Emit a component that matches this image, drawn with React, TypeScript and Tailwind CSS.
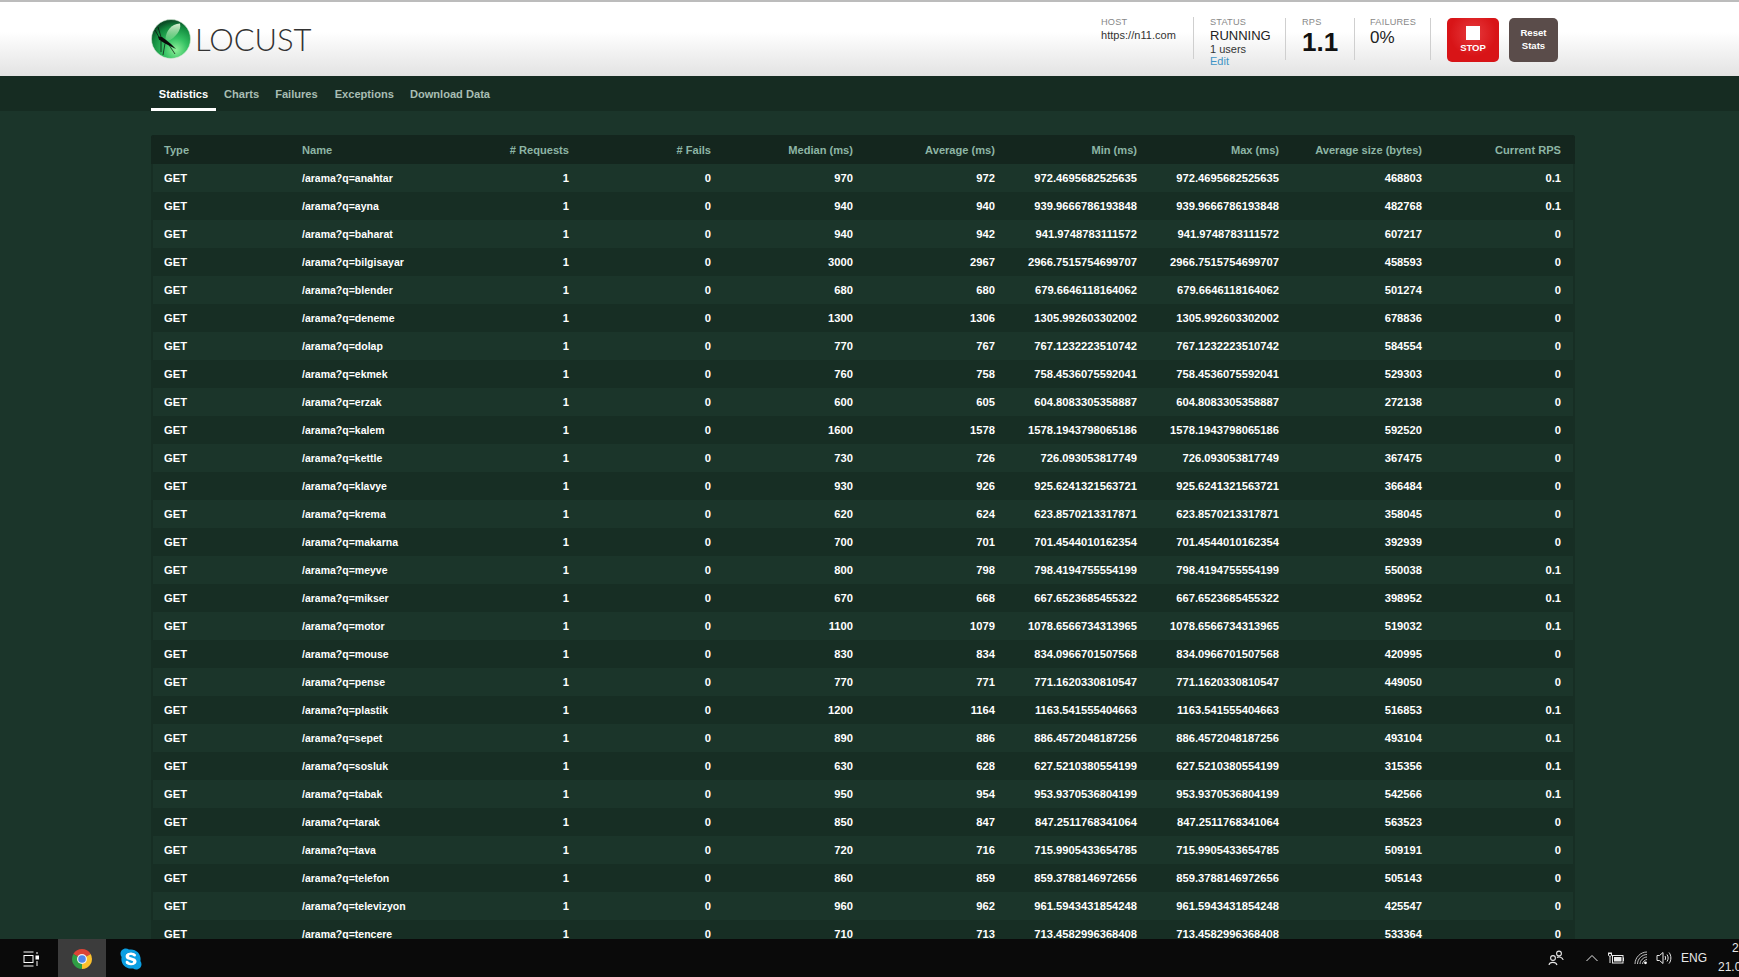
import { FaSkype } from "react-icons/fa";

const rows: [string, number, number, string, number, string][] = [
  ["anahtar", 970, 972, "972.4695682525635", 468803, "0.1"],
  ["ayna", 940, 940, "939.9666786193848", 482768, "0.1"],
  ["baharat", 940, 942, "941.9748783111572", 607217, "0"],
  ["bilgisayar", 3000, 2967, "2966.7515754699707", 458593, "0"],
  ["blender", 680, 680, "679.6646118164062", 501274, "0"],
  ["deneme", 1300, 1306, "1305.992603302002", 678836, "0"],
  ["dolap", 770, 767, "767.1232223510742", 584554, "0"],
  ["ekmek", 760, 758, "758.4536075592041", 529303, "0"],
  ["erzak", 600, 605, "604.8083305358887", 272138, "0"],
  ["kalem", 1600, 1578, "1578.1943798065186", 592520, "0"],
  ["kettle", 730, 726, "726.093053817749", 367475, "0"],
  ["klavye", 930, 926, "925.6241321563721", 366484, "0"],
  ["krema", 620, 624, "623.8570213317871", 358045, "0"],
  ["makarna", 700, 701, "701.4544010162354", 392939, "0"],
  ["meyve", 800, 798, "798.4194755554199", 550038, "0.1"],
  ["mikser", 670, 668, "667.6523685455322", 398952, "0.1"],
  ["motor", 1100, 1079, "1078.6566734313965", 519032, "0.1"],
  ["mouse", 830, 834, "834.0966701507568", 420995, "0"],
  ["pense", 770, 771, "771.1620330810547", 449050, "0"],
  ["plastik", 1200, 1164, "1163.541555404663", 516853, "0.1"],
  ["sepet", 890, 886, "886.4572048187256", 493104, "0.1"],
  ["sosluk", 630, 628, "627.5210380554199", 315356, "0.1"],
  ["tabak", 950, 954, "953.9370536804199", 542566, "0.1"],
  ["tarak", 850, 847, "847.2511768341064", 563523, "0"],
  ["tava", 720, 716, "715.9905433654785", 509191, "0"],
  ["telefon", 860, 859, "859.3788146972656", 505143, "0"],
  ["televizyon", 960, 962, "961.5943431854248", 425547, "0"],
  ["tencere", 710, 713, "713.4582996368408", 533364, "0"],
];

function Logo() {
  return (
    <svg width="40" height="40" viewBox="0 0 40 40" className="shrink-0">
      <defs>
        <radialGradient id="lg" cx="0.62" cy="0.78" r="0.75">
          <stop offset="0" stopColor="#8ff09a" />
          <stop offset="0.4" stopColor="#35c263" />
          <stop offset="0.8" stopColor="#128a3e" />
          <stop offset="1" stopColor="#0b4f27" />
        </radialGradient>
        <linearGradient id="wing" x1="0" y1="0" x2="0" y2="1">
          <stop offset="0" stopColor="#e4f7dc" stopOpacity="0.95" />
          <stop offset="1" stopColor="#9ce6a0" stopOpacity="0.3" />
        </linearGradient>
      </defs>
      <circle cx="20" cy="20" r="19.5" fill="url(#lg)" stroke="#d5e8d5" strokeWidth="0.6" />
      <path d="M14.5 20 C15 12 20 5 29 4.5 C31 11 24 19 17 22 Z" fill="url(#wing)" />
      <path d="M7 17.5 L11 18 L15 21 L20 25 L25 30 L19 27 L14 24.5 L10 22 L8 20.5 Z" fill="#0a0a0a" />
      <path d="M7 8 L10 18 M4 11 L9 20 M10 22 L10 33 M14 24.5 L12 36 M18 26 L24 35" stroke="#0a0a0a" strokeWidth="0.7" fill="none" />
    </svg>
  );
}

function Chrome() {
  return (
    <svg width="24" height="24" viewBox="0 0 48 48" className="mt-[2px]">
      <path d="M24 24 L6.7 14 A20 20 0 0 1 41.3 14 Z" fill="#db4437" />
      <path d="M24 24 L41.3 14 A20 20 0 0 1 24 44 Z" fill="#fbc02d" />
      <path d="M24 24 L24 44 A20 20 0 0 1 6.7 14 Z" fill="#2f9e44" />
      <circle cx="24" cy="24" r="10" fill="#f1f1f1" />
      <circle cx="24" cy="24" r="7.6" fill="#4f86ec" />
    </svg>
  );
}

function TaskView() {
  return (
    <svg width="16" height="16" viewBox="0 0 16 16" fill="none" stroke="#fff" strokeWidth="1">
      <path d="M0.5 1H10.5 M0.5 15H10.5" />
      <rect x="1" y="4.5" width="9" height="7" />
      <rect x="13" y="5" width="2.5" height="3" fill="#fff" />
      <path d="M14 1V3 M14 10V15" />
    </svg>
  );
}

function People() {
  return (
    <svg width="16" height="16" viewBox="0 0 16 16" fill="none" stroke="#e8e8e8" strokeWidth="1.1">
      <circle cx="5" cy="8" r="2.4" />
      <path d="M1 15 C1.5 11.5 8 11.5 9 15" />
      <circle cx="11" cy="3.5" r="2.4" />
      <path d="M9 7.5 C11 6.3 14.5 7 15.2 10" />
    </svg>
  );
}

function Battery() {
  return (
    <svg width="18" height="14" viewBox="0 0 18 14" fill="none" stroke="#e8e8e8" strokeWidth="1">
      <rect x="5.5" y="4.5" width="10.5" height="7.5" />
      <rect x="7" y="6" width="7.5" height="4.5" fill="#e8e8e8" stroke="none" />
      <path d="M16.5 6.5V10" />
      <path d="M1 2.5H5 M2 1V2.5 M4 1V2.5 M1.5 2.5V4.5C1.5 5.5 4.5 5.5 4.5 4.5V2.5 M3 5.5V12" />
    </svg>
  );
}

function Wifi() {
  return (
    <svg width="14" height="14" viewBox="0 0 14 14" fill="none" stroke="#d8d8d8" strokeWidth="0.9">
      <path d="M1 13C1 6.5 6.5 1 13 1" />
      <path d="M3.5 13C3.5 8 8 3.5 13 3.5" />
      <path d="M6 13C6 9.5 9.5 6 13 6" />
      <path d="M8.5 13C8.5 11 11 8.5 13 8.5" />
      <circle cx="11.5" cy="11.8" r="1.4" fill="#fff" stroke="none" />
    </svg>
  );
}

function Volume() {
  return (
    <svg width="16" height="14" viewBox="0 0 16 14" fill="none" stroke="#e8e8e8" strokeWidth="1">
      <path d="M1 4.5H3.5L7 1.5V12.5L3.5 9.5H1Z" />
      <path d="M9 5C9.8 6 9.8 8 9 9 M11 3.5C12.5 5.5 12.5 8.5 11 10.5 M13 1.5C15.5 4.5 15.5 9.5 13 12.5" />
    </svg>
  );
}

function Chevron() {
  return (
    <svg width="12" height="8" viewBox="0 0 12 8" fill="none" stroke="#e8e8e8" strokeWidth="1">
      <path d="M0.5 7L6 1.5L11.5 7" />
    </svg>
  );
}

const th = "first:border-l-2 last:border-r-2 border-[#14261e] pr-[12px] pt-[1px] text-right font-bold text-[11.1px]";
const td = "first:border-l-2 last:border-r-2 border-[#172e24] pr-[12px] text-right font-bold text-[11.2px]";
const label = "text-[9.2px] leading-[10px] tracking-[0.2px] text-[#888]";

export default function App() {
  return (
    <div className="h-[977px] w-[1739px] flex flex-col overflow-hidden font-['Liberation_Sans',Arial,sans-serif]">
      <header className="h-[76px] shrink-0 border-t-2 border-[#bcbcbc] bg-gradient-to-b from-[#ffffff] from-40% to-[#e3e3e3] flex items-start">
        <div className="ml-[151px] mt-[17px] flex items-center">
          <Logo />
          <span className="ml-[4px] font-['Lato',sans-serif] font-light text-[31px] leading-[40px] tracking-[-0.1px] text-[#333]">LOCUST</span>
        </div>
        <div className="ml-auto mr-[181px] mt-[16px] flex items-start text-[#333]">
          <div className="w-[93px] h-[42px] border-r border-[#cfcfcf] -mt-px">
            <div className={label}>HOST</div>
            <div className="text-[11px] leading-[14px] tracking-[0.03px] pt-px">https://n11.com</div>
          </div>
          <div className="w-[92px] h-[42px] pl-[16px] border-r border-[#cfcfcf]">
            <div className={`${label} -mt-px`}>STATUS</div>
            <div className="text-[13px] leading-[15px] text-[#222] mt-px">RUNNING</div>
            <div className="text-[11px] leading-[13px]">1 users</div>
            <div className="text-[11px] leading-[11px] text-[#3f94c5]">Edit</div>
          </div>
          <div className="w-[69px] h-[42px] pl-[16px] border-r border-[#cfcfcf]">
            <div className={`${label} -mt-px`}>RPS</div>
            <div className="text-[26px] leading-[28px] font-bold text-[#111] mt-px">1.1</div>
          </div>
          <div className="w-[76px] h-[42px] pl-[15px] border-r border-[#cfcfcf]">
            <div className={`${label} -mt-px`}>FAILURES</div>
            <div className="text-[17px] leading-[20px] text-[#222] mt-px">0%</div>
          </div>
          <div className="ml-[16px] w-[52px] h-[44px] rounded-[5px] bg-[radial-gradient(circle_at_50%_35%,#e63a3d,#d81417_60%)] flex flex-col items-center pt-[8px]">
            <div className="w-[14px] h-[14px] bg-white" />
            <div className="mt-[2px] text-[9.5px] leading-[12px] font-bold text-white">STOP</div>
          </div>
          <div className="ml-[10px] w-[49px] h-[44px] pb-[2px] rounded-[5px] bg-[#5a4c4a] flex items-center justify-center text-center text-[9.6px] leading-[13px] font-bold text-white">
            Reset<br />Stats
          </div>
        </div>
      </header>

      <nav className="h-[35px] shrink-0 bg-[#162c22] pl-[151px] flex text-[11.1px] font-bold text-[#a8bdb3]">
        <a className="h-[35px] w-[65px] pt-[4px] flex items-center justify-center border-b-[3px] border-white text-white">Statistics</a>
        <a className="h-[35px] pt-[1px] pl-[8px] pr-[8px] flex items-center">Charts</a>
        <a className="h-[35px] pt-[1px] px-[8px] flex items-center">Failures</a>
        <a className="h-[35px] pt-[1px] pl-[9px] pr-[8px] flex items-center">Exceptions</a>
        <a className="h-[35px] pt-[1px] pl-[8px] pr-[8px] flex items-center">Download Data</a>
      </nav>

      <main className="flex-1 min-h-0 overflow-hidden bg-[#1b352a] pt-[24px] pl-[151px]">
        <table className="table-fixed w-[1424px] border-separate border-spacing-0">
          <colgroup>
            <col className="w-[138px]" />
            <col className="w-[150px]" />
            <col className="w-[142px]" />
            <col className="w-[142px]" />
            <col className="w-[142px]" />
            <col className="w-[142px]" />
            <col className="w-[142px]" />
            <col className="w-[142px]" />
            <col className="w-[143px]" />
            <col className="w-[141px]" />
          </colgroup>
          <thead>
            <tr className="h-[29px] bg-[#14261e] text-[#8db5a5]">
              <th className={`${th} !text-left pl-[11px] rounded-tl-[3px]`}>Type</th>
              <th className={`${th} !text-left pl-[13px]`}>Name</th>
              <th className={th}># Requests</th>
              <th className={th}># Fails</th>
              <th className={th}>Median (ms)</th>
              <th className={th}>Average (ms)</th>
              <th className={th}>Min (ms)</th>
              <th className={th}>Max (ms)</th>
              <th className={th}>Average size (bytes)</th>
              <th className={`${th} rounded-tr-[3px]`}>Current RPS</th>
            </tr>
          </thead>
          <tbody className="text-white">
            {rows.map((r, i) => (
              <tr key={r[0]} className={`h-[28px] ${i % 2 === 0 ? "bg-[#1b352a]" : "bg-[#172e24]"}`}>
                <td className={`${td} !text-left pl-[11px]`}>GET</td>
                <td className={`${td} !text-left pl-[13px] pt-[1px] !text-[10.5px]`}>/arama?q={r[0]}</td>
                <td className={td}>1</td>
                <td className={td}>0</td>
                <td className={td}>{r[1]}</td>
                <td className={td}>{r[2]}</td>
                <td className={td}>{r[3]}</td>
                <td className={td}>{r[3]}</td>
                <td className={td}>{r[4]}</td>
                <td className={td}>{r[5]}</td>
              </tr>
            ))}
          </tbody>
        </table>
      </main>

      <footer className="h-[38px] shrink-0 bg-[#0a0a0a] flex items-center text-[#e8e8e8]">
        <div className="ml-[23px] mt-[2px]"><TaskView /></div>
        <div className="ml-[19px] w-[48px] h-[38px] bg-[#3c3c3c] flex items-center justify-center"><Chrome /></div>
        <div className="ml-[14px] mt-[2px] relative w-[22px] h-[22px] flex items-center justify-center">
          <div className="absolute inset-[4px] bg-white rounded-full" />
          <FaSkype className="relative text-[#0a9fe3]" size={24} />
        </div>
        <div className="ml-auto flex items-center">
          <People />
          <div className="ml-[22px]"><Chevron /></div>
          <div className="ml-[9px]"><Battery /></div>
          <div className="ml-[9px]"><Wifi /></div>
          <div className="ml-[8px]"><Volume /></div>
          <div className="ml-[9px] text-[12px] w-[37px]">ENG</div>
          <div className="w-[21px] overflow-hidden">
            <div className="w-[58px] text-center text-[12px] leading-[19px]">
              21:04<br />21.05.2019
            </div>
          </div>
        </div>
      </footer>
    </div>
  );
}
